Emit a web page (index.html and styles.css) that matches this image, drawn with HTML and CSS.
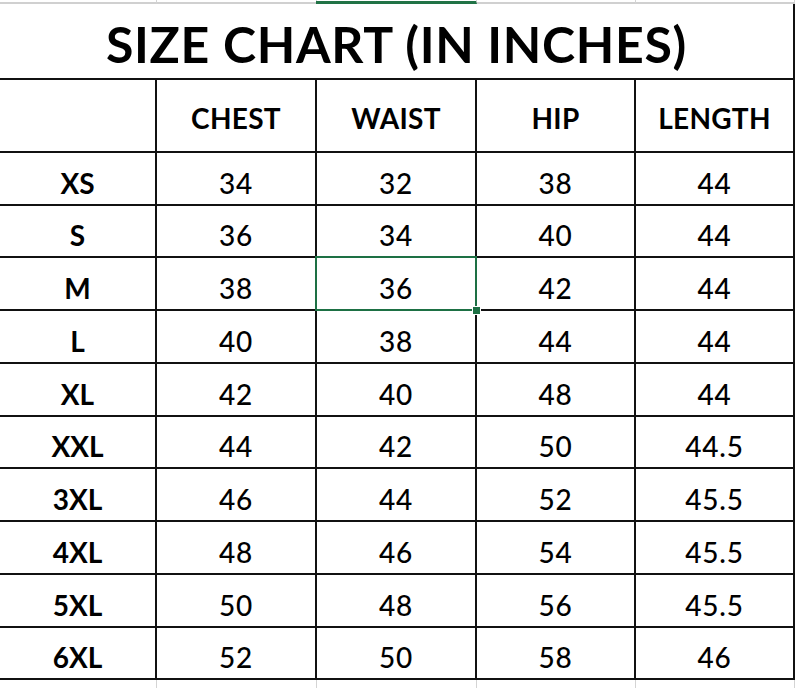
FILE: index.html
```html
<!DOCTYPE html>
<html>
<head>
<meta charset="utf-8">
<link rel="stylesheet" href="styles.css">
</head>
<body>
<div class="sheet">
  <div class="topstrip">
    <div class="tcell"></div>
    <div class="tcell"></div>
    <div class="tcell sel"></div>
    <div class="tcell"></div>
    <div class="tcell"></div>
  </div>
  <div class="grid">
    <div class="title">SIZE CHART (IN INCHES)</div>

    <div class="c head"></div>
    <div class="c head">CHEST</div>
    <div class="c head">WAIST</div>
    <div class="c head">HIP</div>
    <div class="c head">LENGTH</div>

    <div class="c lbl r53">XS</div><div class="c num">34</div><div class="c num">32</div><div class="c num">38</div><div class="c num">44</div>
    <div class="c lbl r52">S</div><div class="c num">36</div><div class="c num">34</div><div class="c num">40</div><div class="c num">44</div>
    <div class="c lbl r53">M</div><div class="c num">38</div><div class="c num active">36<span class="handle"></span></div><div class="c num">42</div><div class="c num">44</div>
    <div class="c lbl r53">L</div><div class="c num">40</div><div class="c num">38</div><div class="c num">44</div><div class="c num">44</div>
    <div class="c lbl r53">XL</div><div class="c num">42</div><div class="c num">40</div><div class="c num">48</div><div class="c num">44</div>
    <div class="c lbl r52">XXL</div><div class="c num">44</div><div class="c num">42</div><div class="c num">50</div><div class="c num">44.5</div>
    <div class="c lbl r53">3XL</div><div class="c num">46</div><div class="c num">44</div><div class="c num">52</div><div class="c num">45.5</div>
    <div class="c lbl r53">4XL</div><div class="c num">48</div><div class="c num">46</div><div class="c num">54</div><div class="c num">45.5</div>
    <div class="c lbl r53">5XL</div><div class="c num">50</div><div class="c num">48</div><div class="c num">56</div><div class="c num">45.5</div>
    <div class="c lbl r52">6XL</div><div class="c num">52</div><div class="c num">50</div><div class="c num">58</div><div class="c num">46</div>
  </div>
  <div class="bottomstrip">
    <div class="tcell"></div>
    <div class="tcell"></div>
    <div class="tcell"></div>
    <div class="tcell"></div>
    <div class="tcell"></div>
  </div>
</div>
</body>
</html>
```
FILE: styles.css
```css
html, body {
  margin: 0;
  padding: 0;
  background: #ffffff;
}
body {
  width: 800px;
  height: 688px;
  overflow: hidden;
  font-family: Lato, "Liberation Sans", sans-serif;
  color: #000;
}
.sheet {
  width: 800px;
}
.topstrip, .bottomstrip {
  display: grid;
  grid-template-columns: 157px 160px 160px 159px 159px 5px;
}
.topstrip {
  height: 4px;
}
.topstrip .tcell {
  height: 2px;
  border-right: 1px solid #d4d4d4;
  border-bottom: 2px solid #d0d0d0;
}
.topstrip .tcell.sel {
  border-bottom: 3px solid #217346;
  height: 1px;
  margin-left: -1px;
}
.bottomstrip {
  height: 8px;
}
.bottomstrip .tcell {
  border-right: 1px solid #d4d4d4;
}
.grid {
  display: grid;
  grid-template-columns: 157px 160px 160px 159px 159px;
  grid-template-rows: 76px 73px;
}
.title {
  grid-column: 1 / 6;
  border-right: 2px solid #111;
  border-bottom: 2px solid #111;
  display: flex;
  align-items: center;
  justify-content: center;
  font-weight: 700;
  font-size: 50px;
  padding-top: 5px;
  box-sizing: border-box;
  letter-spacing: 0.7px;
}
.c {
  border-right: 2px solid #111;
  border-bottom: 2px solid #111;
  display: flex;
  align-items: center;
  justify-content: center;
  box-sizing: border-box;
  font-size: 28px;
  position: relative;
}
.head {
  font-weight: 700;
  padding-top: 4px;
  letter-spacing: 0.3px;
}
.lbl {
  font-weight: 700;
  padding-top: 8px;
}
.num {
  font-weight: 500;
  padding-top: 8px;
  letter-spacing: 0.8px;
}
.r53 { height: 53px; }
.r52 { height: 52px; }
.active {
  z-index: 3;
}
.active::after {
  content: "";
  position: absolute;
  left: -2px;
  top: -2px;
  right: -2px;
  bottom: -2px;
  border: 2px solid #1d7044;
}
.handle {
  position: absolute;
  right: -6px;
  bottom: -6px;
  width: 7px;
  height: 7px;
  background: #1d7044;
  border: 1px solid #fff;
  z-index: 4;
}
```
